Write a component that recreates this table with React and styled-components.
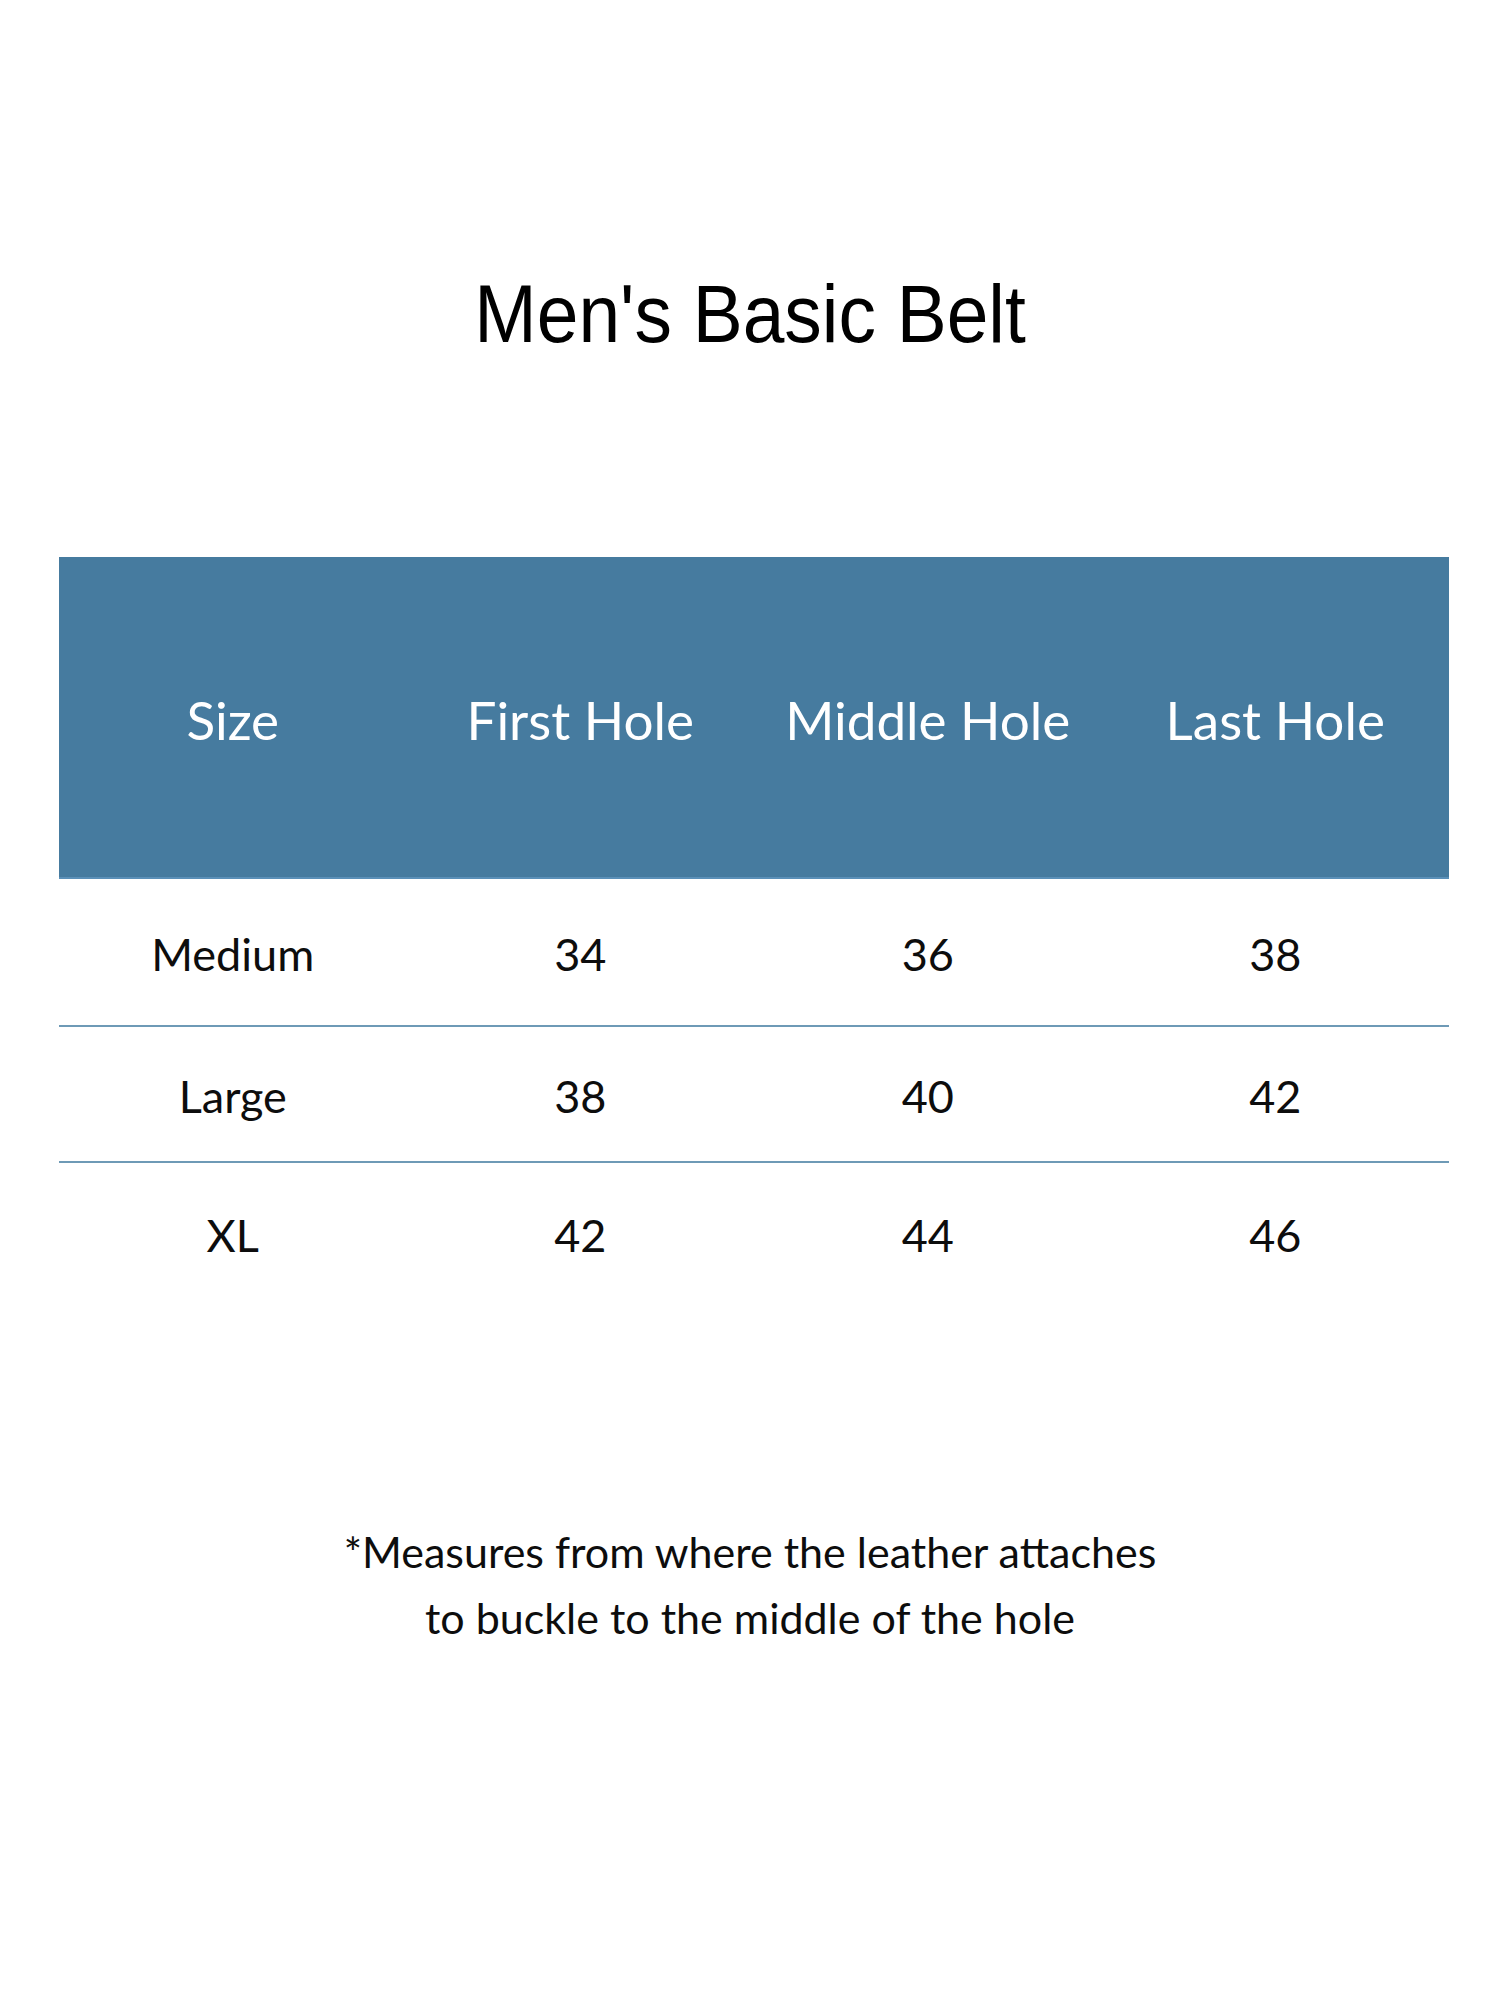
import React from 'react';
import styled, { createGlobalStyle } from "styled-components";

const rows = [
  { size: "Medium", first: 34, middle: 36, last: 38, h: 148 },
  { size: "Large", first: 38, middle: 40, last: 42, h: 136 },
  { size: "XL", first: 42, middle: 44, last: 46, h: 140 },
];

const App = () => {
  return (
    <Page>
      <GlobalStyle />
      <TitleWrap>
        <Title>Men's Basic Belt</Title>
      </TitleWrap>

      <Table>
        <HeadRow>
          <HeadCell>Size</HeadCell>
          <HeadCell>First Hole</HeadCell>
          <HeadCell>Middle Hole</HeadCell>
          <HeadCell>Last Hole</HeadCell>
        </HeadRow>
        {rows.map((r, i) => (
          <BodyRow key={r.size} $h={r.h} $last={i === rows.length - 1}>
            <Cell>{r.size}</Cell>
            <Cell>{r.first}</Cell>
            <Cell>{r.middle}</Cell>
            <Cell>{r.last}</Cell>
          </BodyRow>
        ))}
      </Table>

      <Note>
        *Measures from where the leather attaches
        <br />
        to buckle to the middle of the hole
      </Note>
    </Page>
  );
};

export default App;



const GlobalStyle = createGlobalStyle`
  html, body {
    margin: 0;
    padding: 0;
    background: #ffffff;
  }
`;

const Page = styled.div`
  width: 1500px;
  height: 2000px;
  background: #fff;
  display: flex;
  flex-direction: column;
  align-items: center;
`;

const TitleWrap = styled.div`
  margin-top: 264px;
  height: 100px;
  display: flex;
  justify-content: center;
`;

const Title = styled.h1`
  margin: 0;
  display: inline-block;
  font-family: "Liberation Sans", Arial, sans-serif;
  font-weight: 400;
  font-size: 81px;
  line-height: 100px;
  color: #000;
  transform: scaleX(0.925);
  white-space: nowrap;
`;

const Table = styled.div`
  margin-top: 193px;
  margin-left: 8px;
  width: 1390px;
  display: flex;
  flex-direction: column;
  font-family: Lato, "Open Sans", sans-serif;
`;

const HeadRow = styled.div`
  height: 322px;
  box-sizing: border-box;
  background: #467b9f;
  border-bottom: 2px solid #5b90b8;
  display: grid;
  grid-template-columns: repeat(4, 1fr);
  align-items: center;
`;

const HeadCell = styled.div`
  text-align: center;
  color: #fff;
  font-size: 53px;
  padding-top: 4px;
`;

const BodyRow = styled.div`
  height: ${(p) => p.$h}px;
  box-sizing: border-box;
  border-bottom: ${(p) => (p.$last ? "none" : "2px solid #6e9ab6")};
  display: grid;
  grid-template-columns: repeat(4, 1fr);
  align-items: center;
`;

const Cell = styled.div`
  text-align: center;
  color: #0d0d0d;
  font-size: 45px;
  padding-top: 3px;
`;

const Note = styled.p`
  margin: 216px 0 0;
  font-family: Lato, "Open Sans", sans-serif;
  font-size: 43px;
  line-height: 66px;
  color: #0d0d0d;
  text-align: center;
`;
